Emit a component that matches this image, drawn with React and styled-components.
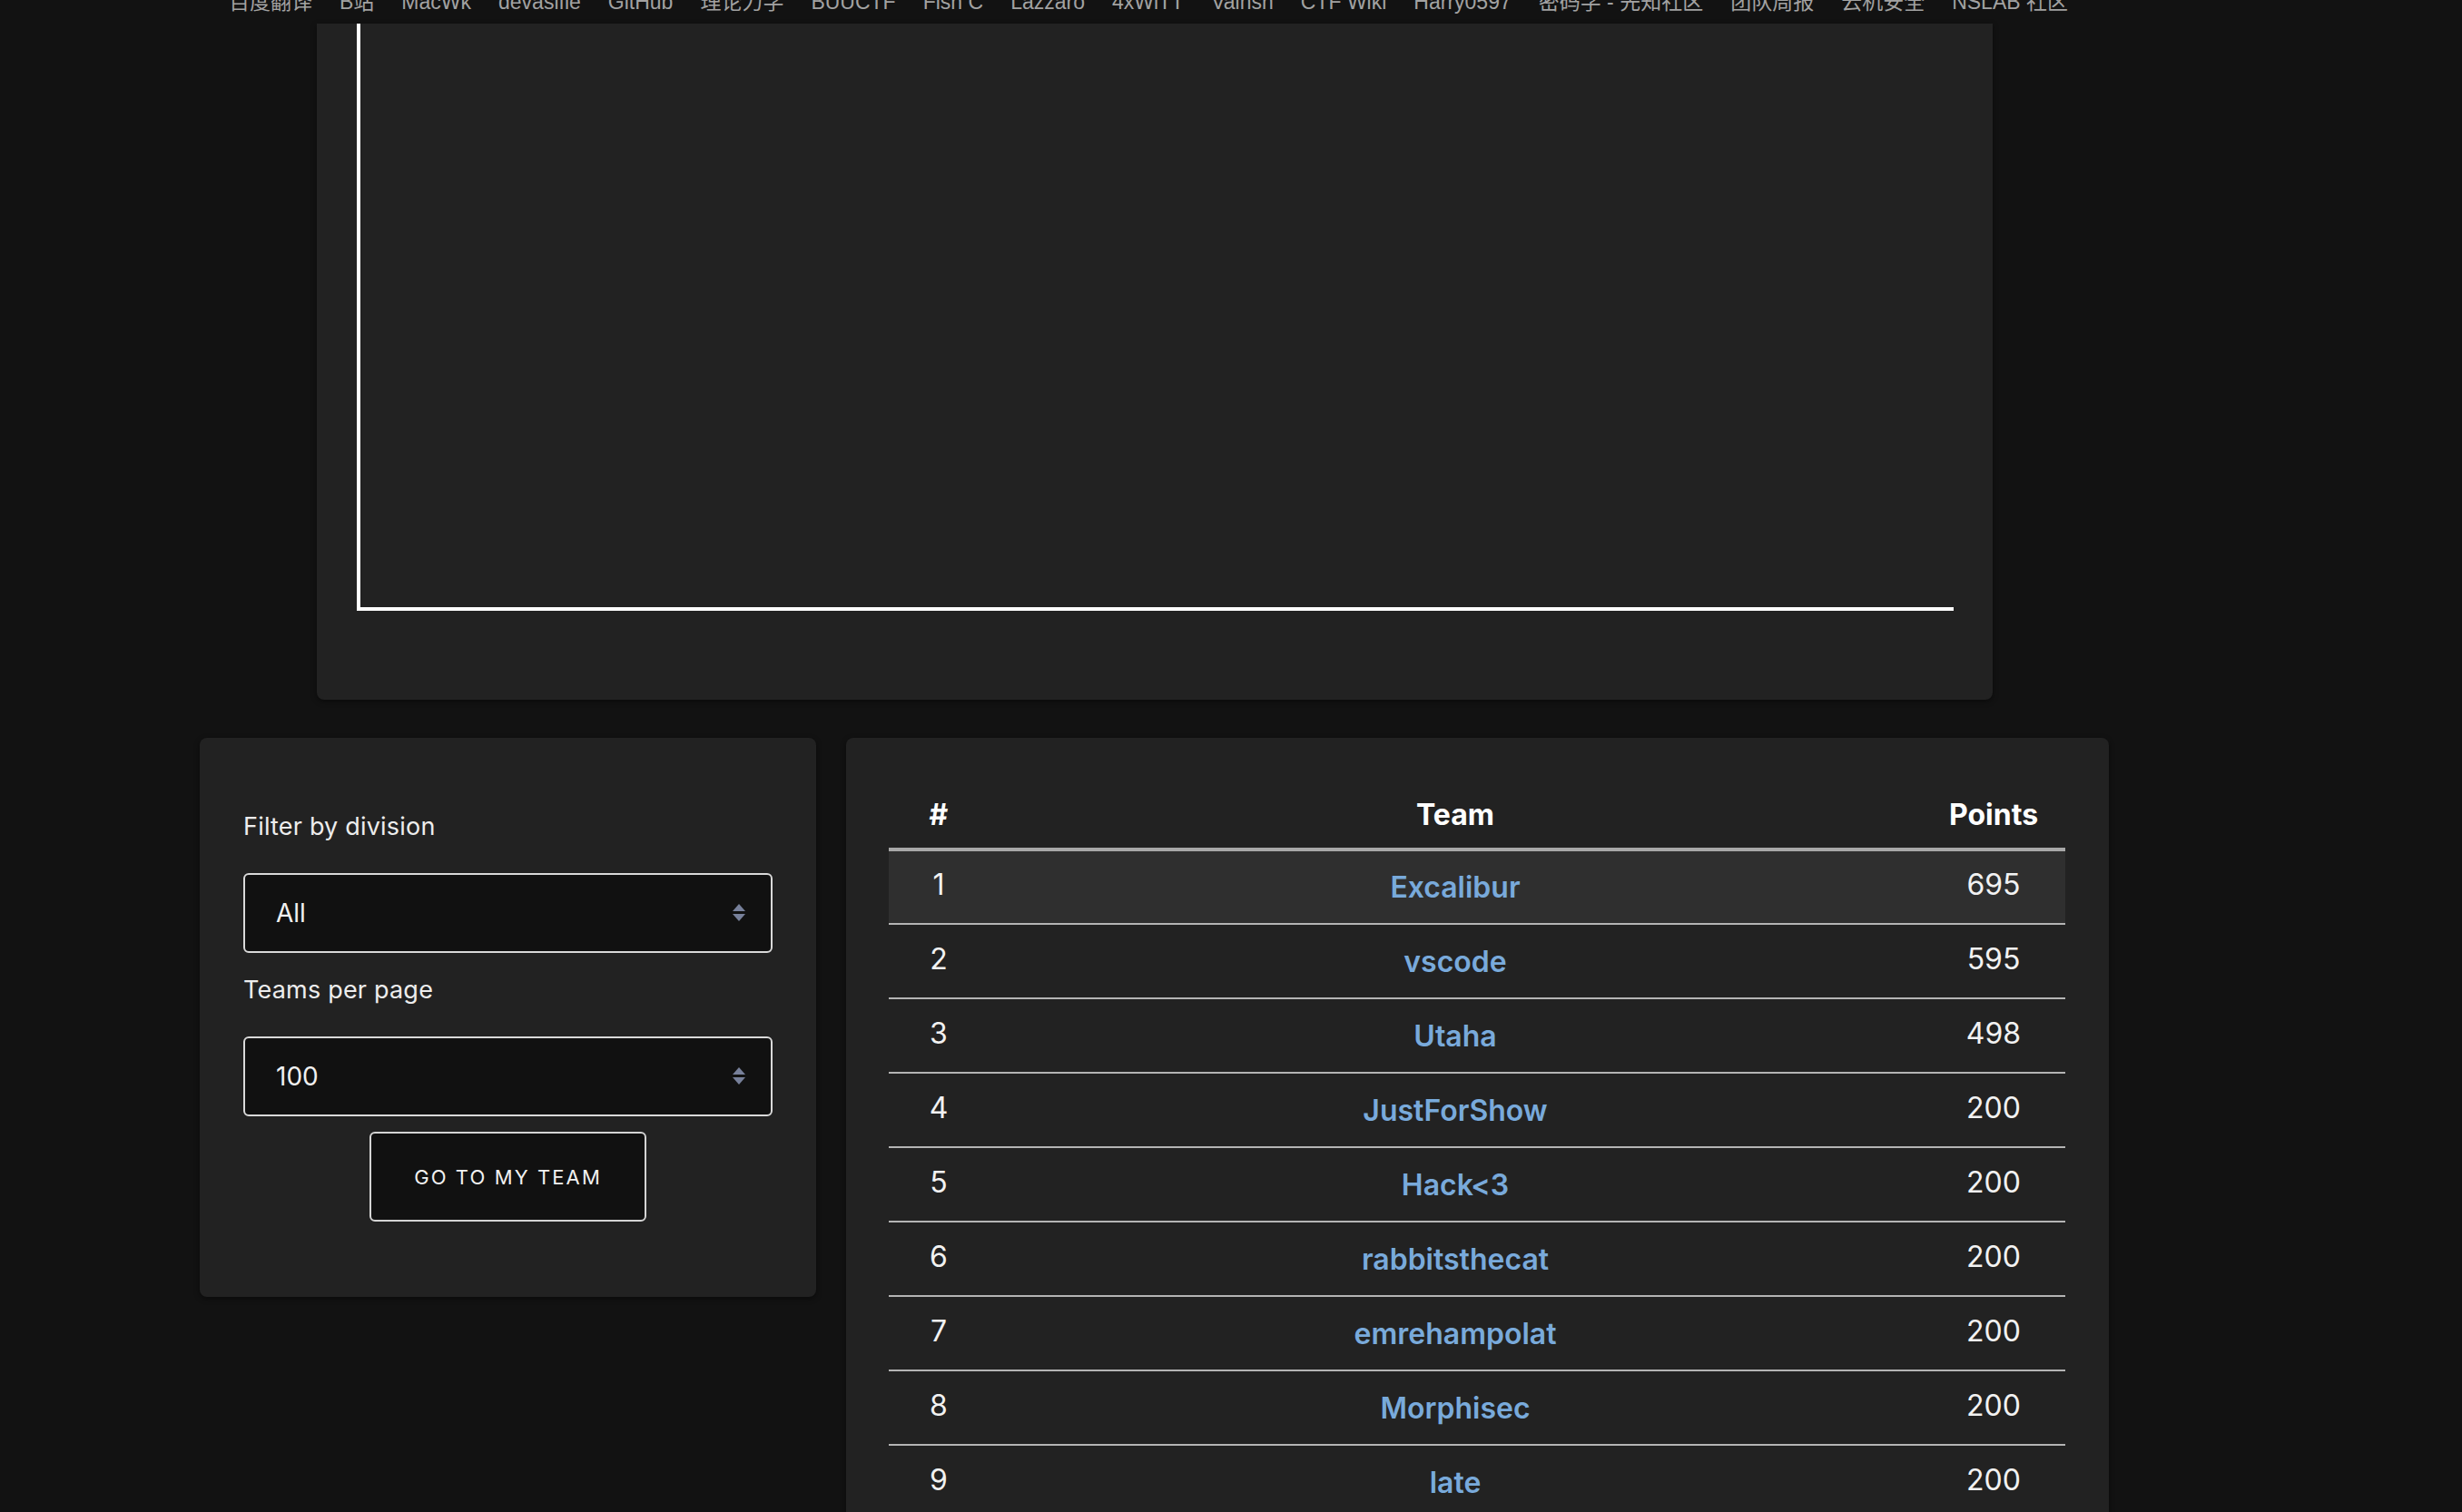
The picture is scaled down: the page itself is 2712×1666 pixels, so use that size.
import React from "react";
import styled, { createGlobalStyle } from "styled-components";

const GlobalStyle = createGlobalStyle`
  html, body {
    margin: 0;
    padding: 0;
    background: #121212;
    overflow: hidden;
  }
  * { box-sizing: border-box; }
`;

const Page = styled.div`
  height: 1666px;
  overflow: hidden;
  background: #121212;
  font-family: Inter, "Noto Sans", "Noto Sans CJK SC", sans-serif;
  color: #ececec;
`;

const BookmarkBar = styled.div`
  height: 26px;
  overflow: hidden;
  background: #121212;
`;

const BookmarkList = styled.div`
  display: flex;
  gap: 30px;
  padding-left: 252px;
  margin-top: -9px;
  font-family: "Liberation Sans", "Noto Sans CJK SC", sans-serif;
  font-size: 23px;
  line-height: 22px;
  color: #a2a2a2;
  white-space: nowrap;
`;

const Main = styled.main`
  width: 2543px;
`;

const ChartCard = styled.section`
  width: 1846px;
  margin: 0 auto;
  background: #222222;
  border-radius: 0 0 8px 8px;
  padding: 0 43px 98px 43px;
  box-shadow: 0 2px 6px rgba(0, 0, 0, 0.45);
`;

const ChartSvg = styled.svg`
  display: block;
`;

const BottomRow = styled.div`
  width: 2103px;
  margin: 42px auto 0;
  display: flex;
  gap: 33px;
  align-items: flex-start;
`;

const Card = styled.section`
  background: #222222;
  border-radius: 8px;
  box-shadow: 0 2px 6px rgba(0, 0, 0, 0.45);
`;

const FilterCard = styled(Card)`
  width: 679px;
  padding: 77px 48px 83px;
  display: flex;
  flex-direction: column;
`;

const Label = styled.label`
  font-size: 27px;
  line-height: 42px;
  letter-spacing: 0.2px;
  color: #ededed;
  margin-top: ${(p) => p.$top || 0}px;
`;

const SelectBox = styled.div`
  margin-top: 30px;
  height: 88px;
  border: 2px solid #d9d9d9;
  border-radius: 6px;
  background: #111111;
  display: flex;
  align-items: center;
  justify-content: space-between;
  padding: 0 27px 0 34px;
  font-size: 28px;
  color: #f0f0f0;
`;

const Button = styled.button`
  align-self: center;
  margin-top: 17px;
  width: 305px;
  height: 99px;
  background: #111111;
  border: 2px solid #d4d4d4;
  border-radius: 6px;
  color: #f2f2f2;
  font-family: Inter, "Noto Sans", sans-serif;
  font-size: 22px;
  letter-spacing: 2.1px;
  text-transform: uppercase;
`;

const TableCard = styled(Card)`
  flex: 1;
  padding: 39px 48px 0 47px;
  border-radius: 8px 8px 0 0;
  min-height: 900px;
`;

const Table = styled.table`
  width: 100%;
  border-collapse: collapse;
  table-layout: fixed;
`;

const Th = styled.th`
  height: 84px;
  padding: 8px 0 0;
  font-size: 32px;
  font-weight: 700;
  color: #ffffff;
  text-align: center;
  border-bottom: 4px solid #a8a8a8;
  vertical-align: middle;
`;

const Tr = styled.tr`
  background: ${(p) => (p.$active ? "#2f2f2f" : "transparent")};
`;

const Td = styled.td`
  height: 82px;
  padding: 0;
  font-size: 32px;
  color: #f2f2f2;
  text-align: center;
  vertical-align: middle;
  border-bottom: 2px solid #b4b4b4;
`;

const NumCell = styled(Td)`
  padding-bottom: 6px;
`;

const TeamLink = styled.a`
  color: #79aadb;
  font-weight: 600;
  text-decoration: none;
`;

const UpDown = () => (
  <svg width="16" height="20" viewBox="0 0 16 20">
    <path d="M8 0 L15 8 H1 Z" fill="#77809a" />
    <path d="M1 11 H15 L8 19 Z" fill="#77809a" />
  </svg>
);

const bookmarks = [
  "百度翻译", "B站", "MacWk", "devasifie", "GitHub", "理论力学", "BUUCTF",
  "Fish C", "Lazzaro", "4xWiTT", "Vainsh", "CTF Wiki", "Harry0597",
  "密码学 - 先知社区", "团队周报", "云机安全", "NSLAB 社区",
];

const rows = [
  ["1", "Excalibur", "695"],
  ["2", "vscode", "595"],
  ["3", "Utaha", "498"],
  ["4", "JustForShow", "200"],
  ["5", "Hack<3", "200"],
  ["6", "rabbitsthecat", "200"],
  ["7", "emrehampolat", "200"],
  ["8", "Morphisec", "200"],
  ["9", "late", "200"],
  ["10", "n0ps", "200"],
];

export default function App() {
  return (
    <Page>
      <GlobalStyle />
      <BookmarkBar>
        <BookmarkList>
          {bookmarks.map((b) => (
            <span key={b}>{b}</span>
          ))}
        </BookmarkList>
      </BookmarkBar>

      <Main>
        <ChartCard>
          <ChartSvg width="1760" height="647" viewBox="0 0 1760 647">
            <path d="M3 0 V645 H1760" fill="none" stroke="#ffffff" strokeWidth="4" />
          </ChartSvg>
        </ChartCard>

        <BottomRow>
          <FilterCard>
            <Label>Filter by division</Label>
            <SelectBox>
              <span>All</span>
              <UpDown />
            </SelectBox>
            <Label $top={20}>Teams per page</Label>
            <SelectBox>
              <span>100</span>
              <UpDown />
            </SelectBox>
            <Button>Go to my team</Button>
          </FilterCard>

          <TableCard>
            <Table>
              <colgroup>
                <col style={{ width: 110 }} />
                <col />
                <col style={{ width: 158 }} />
              </colgroup>
              <thead>
                <tr>
                  <Th>#</Th>
                  <Th>Team</Th>
                  <Th>Points</Th>
                </tr>
              </thead>
              <tbody>
                {rows.map(([rank, team, pts]) => (
                  <Tr key={rank} $active={rank === "1"}>
                    <NumCell>{rank}</NumCell>
                    <Td>
                      <TeamLink href="#">{team}</TeamLink>
                    </Td>
                    <NumCell>{pts}</NumCell>
                  </Tr>
                ))}
              </tbody>
            </Table>
          </TableCard>
        </BottomRow>
      </Main>
    </Page>
  );
}
